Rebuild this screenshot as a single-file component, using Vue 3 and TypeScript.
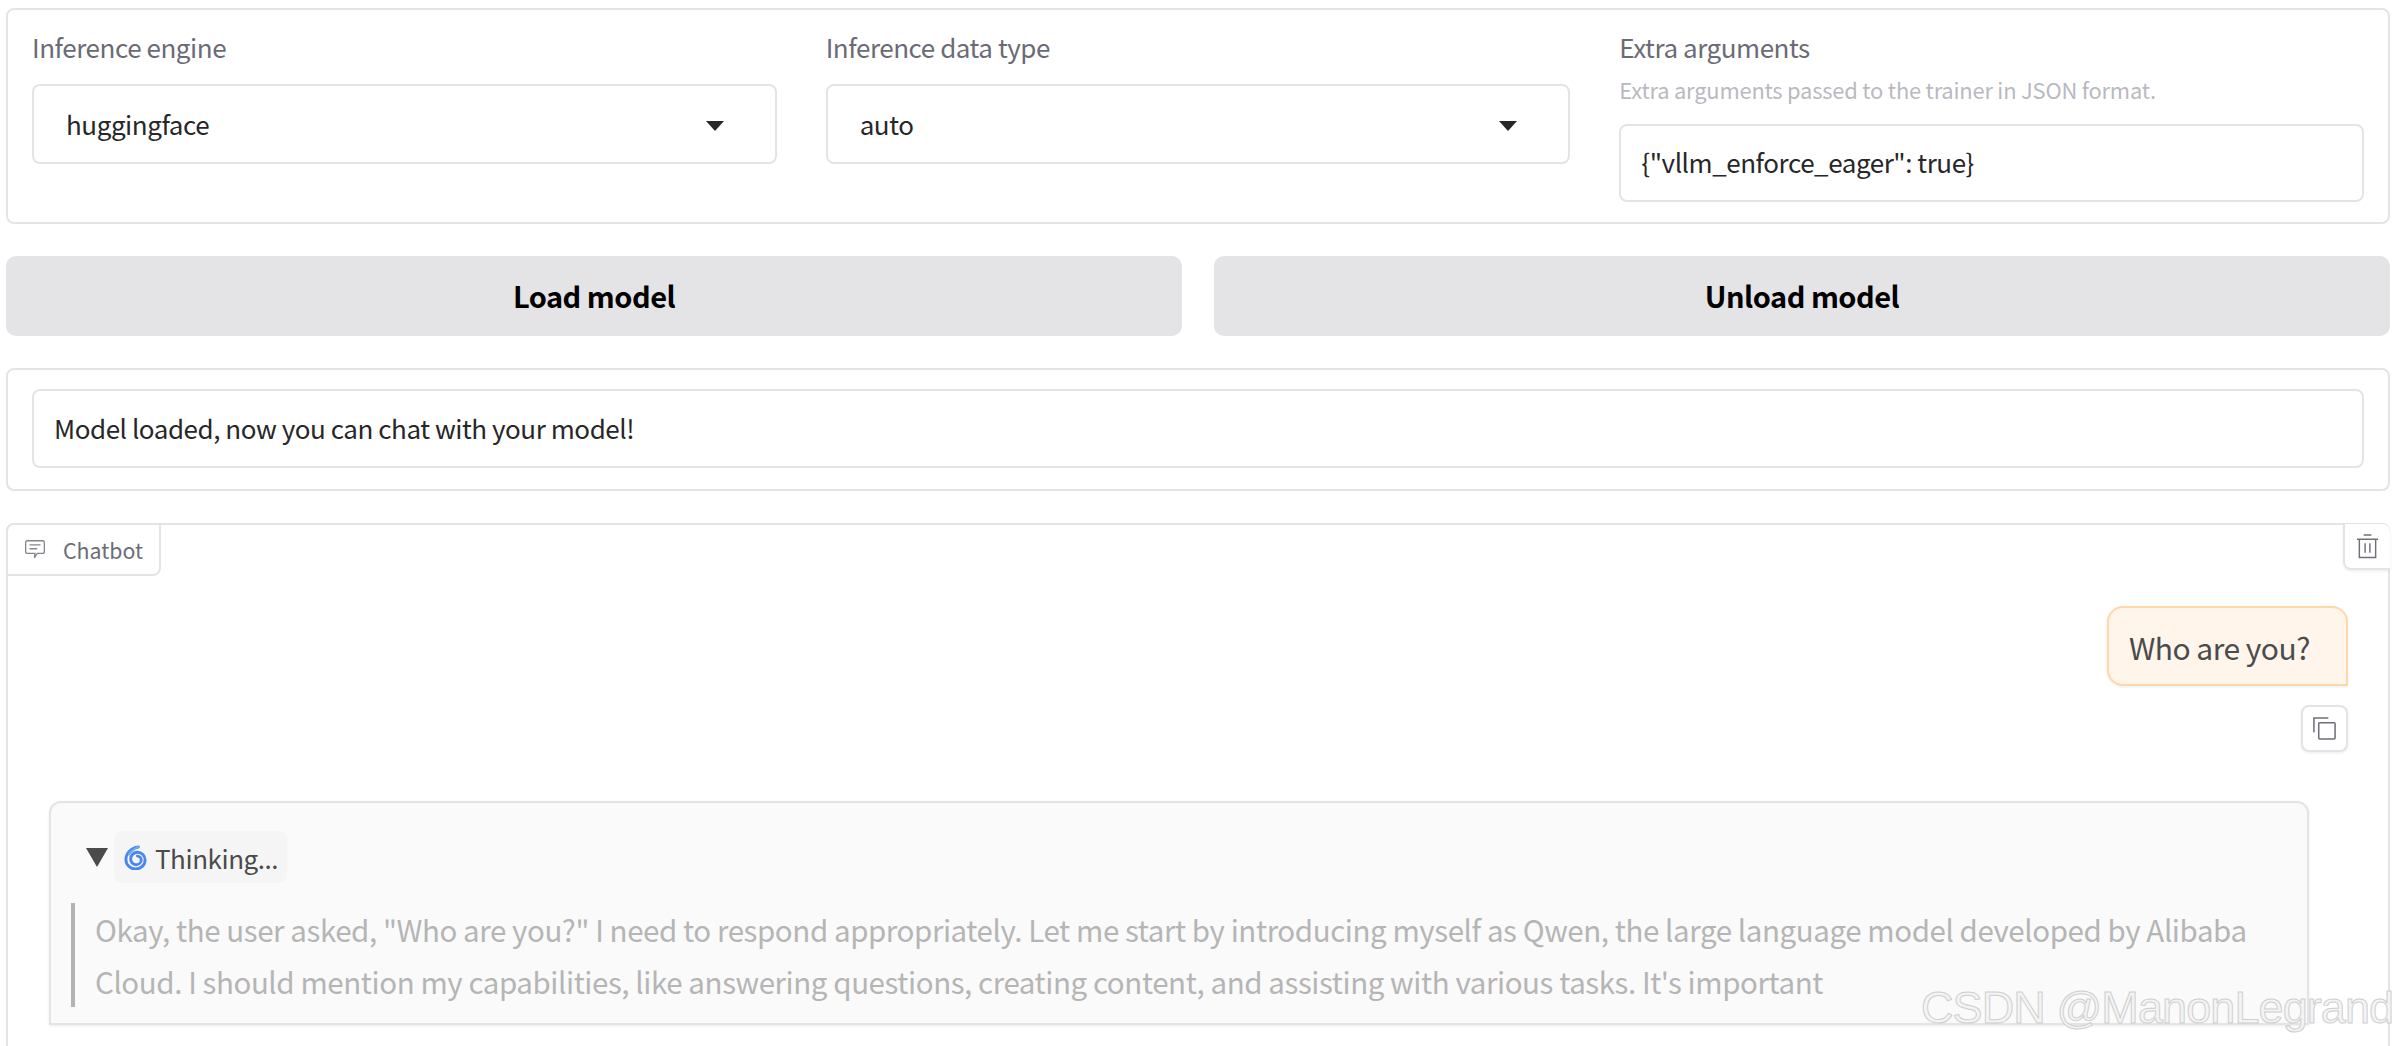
<script setup lang="ts">
const selects = [
  { label: 'Inference engine', value: 'huggingface' },
  { label: 'Inference data type', value: 'auto' },
]
</script>

<template>
  <div class="page">
    <section class="panel row3">
      <div v-for="s in selects" :key="s.label" class="field">
        <div class="label">{{ s.label }}</div>
        <div class="select">
          <span>{{ s.value }}</span>
          <i class="caret"></i>
        </div>
      </div>
      <div class="field">
        <div class="label">Extra arguments</div>
        <div class="info">Extra arguments passed to the trainer in JSON format.</div>
        <div class="input">{"vllm_enforce_eager": true}</div>
      </div>
    </section>

    <div class="buttons">
      <button class="btn">Load model</button>
      <button class="btn">Unload model</button>
    </div>

    <section class="panel status">
      <div class="input">Model loaded, now you can chat with your model!</div>
    </section>

    <section class="chat">
      <div class="tab">
        <svg class="tab-icon" viewBox="0 0 20 20" fill="none" stroke="#85858f" stroke-width="1.2">
          <path d="M3 2.5h14a1.5 1.5 0 0 1 1.5 1.5v8.5a1.5 1.5 0 0 1-1.5 1.5h-5l-2.5 4 .4-4H3a1.5 1.5 0 0 1-1.5-1.5V4A1.5 1.5 0 0 1 3 2.5z" />
          <path d="M5 6.2h10M5 9.8h7" />
        </svg>
        <span>Chatbot</span>
      </div>
      <div class="trash">
        <svg viewBox="0 0 24 26" fill="none" stroke="#6f6f7a" stroke-width="1.5">
          <path d="M1 6h22M8 1.500h8M3.500 6v19h17V6M9.500 10v10M14.500 10v10" />
        </svg>
      </div>

      <div class="user-row">
        <div class="bubble">Who are you?</div>
        <div class="copy">
          <svg viewBox="0 0 26 26" fill="none" stroke="#6f6f7a" stroke-width="1.6">
            <path d="M2 17V2h15" />
            <rect x="7" y="7" width="17" height="17" rx="1" />
          </svg>
        </div>
      </div>

      <div class="thinking">
        <div class="summary">
          <i class="tri"></i>
          <div class="chip">
            <svg class="spiral" viewBox="0 0 24 26" fill="none" stroke-linecap="round">
              <path d="M15 2C8 3 2 8 2 15c0 5.500 4.500 10 10 10s10-4 10-9.500c0-4.500-3.500-8-8-8-3.800 0-7 3-7 7 0 3.300 2.500 6 5.500 6s5.500-2.200 5.500-5c0-2.300-1.800-4-4-4" stroke="#4a86f0" stroke-width="3" />
              <path d="M15 2C11 4 7 6 5 10" stroke="#6fa8f5" stroke-width="2" />
            </svg>
            <span>Thinking...</span>
          </div>
        </div>
        <blockquote class="quote">Okay, the user asked, "Who are you?" I need to respond appropriately. Let me start by introducing myself as Qwen, the large language model developed by Alibaba Cloud. I should mention my capabilities, like answering questions, creating content, and assisting with various tasks. It's important</blockquote>
      </div>
    </section>

    <div class="watermark">CSDN @ManonLegrand</div>
  </div>
</template>

<style>
html, body { margin: 0; background: #fff; overflow: hidden; }
</style>

<style scoped>
.page {
  position: relative;
  width: 2398px;
  height: 1046px;
  overflow: hidden;
  background: #fff;
  box-sizing: border-box;
  padding: 8px 8px 0 6px;
  font-family: "Noto Sans CJK SC", "Noto Sans", sans-serif;
  color: #27272a;
}
.panel {
  border: 2px solid #e4e4e7;
  border-radius: 8px;
  box-sizing: border-box;
  background: #fff;
}
.row3 {
  height: 216px;
  padding: 0 24px;
  display: grid;
  grid-template-columns: repeat(3, 1fr);
  column-gap: 49px;
}
.field { display: flex; flex-direction: column; min-width: 0; }
.label {
  font-size: 26px;
  letter-spacing: -0.45px;
  line-height: 36px;
  margin-top: 19px;
  color: #6b6b76;
}
.select {
  margin-top: 19px;
  height: 80px;
  box-sizing: border-box;
  border: 2px solid #e4e4e7;
  border-radius: 8px;
  padding: 0 51px 2px 32px;
  display: flex;
  align-items: center;
  justify-content: space-between;
  font-size: 26px;
  letter-spacing: -0.45px;
}
.caret {
  width: 0;
  height: 0;
  border-left: 9px solid transparent;
  border-right: 9px solid transparent;
  border-top: 10px solid #27272a;
  margin-top: 5px;
}
.info {
  font-size: 21.900px;
  letter-spacing: -0.2px;
  line-height: 28px;
  margin-top: 11px;
  color: #b9b9c0;
}
.input {
  margin-top: 20px;
  height: 78px;
  box-sizing: border-box;
  border: 2px solid #e4e4e7;
  border-radius: 8px;
  padding: 0 20px 3px;
  display: flex;
  align-items: center;
  font-size: 26px;
  letter-spacing: -0.45px;
}
.buttons {
  margin-top: 32px;
  display: grid;
  grid-template-columns: 1fr 1fr;
  column-gap: 32px;
}
.btn {
  height: 80px;
  border: 0;
  border-radius: 10px;
  background: #e4e4e7;
  color: #000;
  font: 600 29px "Noto Sans CJK SC", "Noto Sans", sans-serif;
  letter-spacing: -0.5px;
  padding: 0 0 2px;
}
.status {
  margin-top: 32px;
  height: 123px;
  padding: 19px 24px 0;
}
.status .input { margin-top: 0; height: 79px; padding-bottom: 2px; }
.chat {
  position: relative;
  margin-top: 32px;
  height: 700px;
  border: 2px solid #e4e4e7;
  border-radius: 8px;
  box-sizing: border-box;
  padding: 81px 40px 0 41px;
}
.tab {
  position: absolute;
  left: -2px;
  top: -2px;
  width: 155px;
  height: 53px;
  box-sizing: border-box;
  border: 2px solid #e4e4e7;
  border-radius: 8px 0 8px 0;
  background: #fff;
  display: flex;
  align-items: center;
  padding: 0 0 1px 16px;
  font-size: 21.300px;
  color: #6b6b76;
}
.tab-icon { width: 22px; height: 22px; margin-right: 17px; }
.trash {
  position: absolute;
  right: -2px;
  top: -1px;
  width: 47px;
  height: 46px;
  box-sizing: border-box;
  border-left: 2px solid #e4e4e7;
  border-bottom: 2px solid #e4e4e7;
  border-radius: 0 8px 0 8px;
  background: #fff;
  display: flex;
  align-items: center;
  justify-content: center;
  box-shadow: 0 1px 3px rgba(0, 0, 0, .08);
}
.trash svg { width: 23px; height: 26px; }
.user-row {
  display: flex;
  flex-direction: column;
  align-items: flex-end;
}
.bubble {
  height: 80px;
  box-sizing: border-box;
  background: #fff5eb;
  border: 2px solid #fed7aa;
  border-radius: 16px 16px 0 16px;
  padding: 2px 36px 0 20px;
  display: flex;
  align-items: center;
  font-size: 30px;
  letter-spacing: -0.5px;
  color: #4b4b4b;
  box-shadow: 0 1px 3px rgba(0, 0, 0, .08);
}
.copy {
  margin-top: 19px;
  width: 47px;
  height: 47px;
  box-sizing: border-box;
  border: 2px solid #e4e4e7;
  border-radius: 8px;
  background: #fff;
  display: flex;
  align-items: center;
  justify-content: center;
  box-shadow: 0 1px 3px rgba(0, 0, 0, .08);
}
.copy svg { width: 25px; height: 25px; }
.thinking {
  margin-top: 49px;
  height: 224px;
  box-sizing: border-box;
  border: 2px solid #e4e4e7;
  border-radius: 12px 12px 0 0;
  background: #fafafa;
  margin-right: 39px;
  padding: 28px 0 0 20px;
  box-shadow: 0 1px 3px rgba(0, 0, 0, .08);
}
.summary { display: flex; align-items: center; padding-left: 15px; height: 52px; }
.tri {
  width: 0;
  height: 0;
  border-left: 11px solid transparent;
  border-right: 11px solid transparent;
  border-top: 19px solid #4b4b4b;
}
.chip {
  margin-left: 6px;
  height: 52px;
  width: 173px;
  box-sizing: border-box;
  padding-left: 10px;
  border-radius: 8px;
  background: #f5f5f5;
  display: flex;
  align-items: center;
  font-size: 26px;
  letter-spacing: -0.45px;
  color: #4b4b4b;
}
.spiral { width: 23px; height: 25px; margin-right: 8px; flex: none; }
.quote {
  margin: 20px 36px 0 0;
  padding: 0 0 0 20px;
  border-left: 4px solid #b3b3b3;
  height: 104px;
  font-size: 29.500px;
  letter-spacing: -0.42px;
  line-height: 52px;
  color: #b5b5b5;
}
.watermark {
  position: absolute;
  left: 1921px;
  top: 982px;
  font: 300 45px "Liberation Sans", sans-serif;
  letter-spacing: -0.9px;
  color: #f4f4f4;
  -webkit-text-stroke: 1px #cfcfcf;
  white-space: nowrap;
}
</style>
